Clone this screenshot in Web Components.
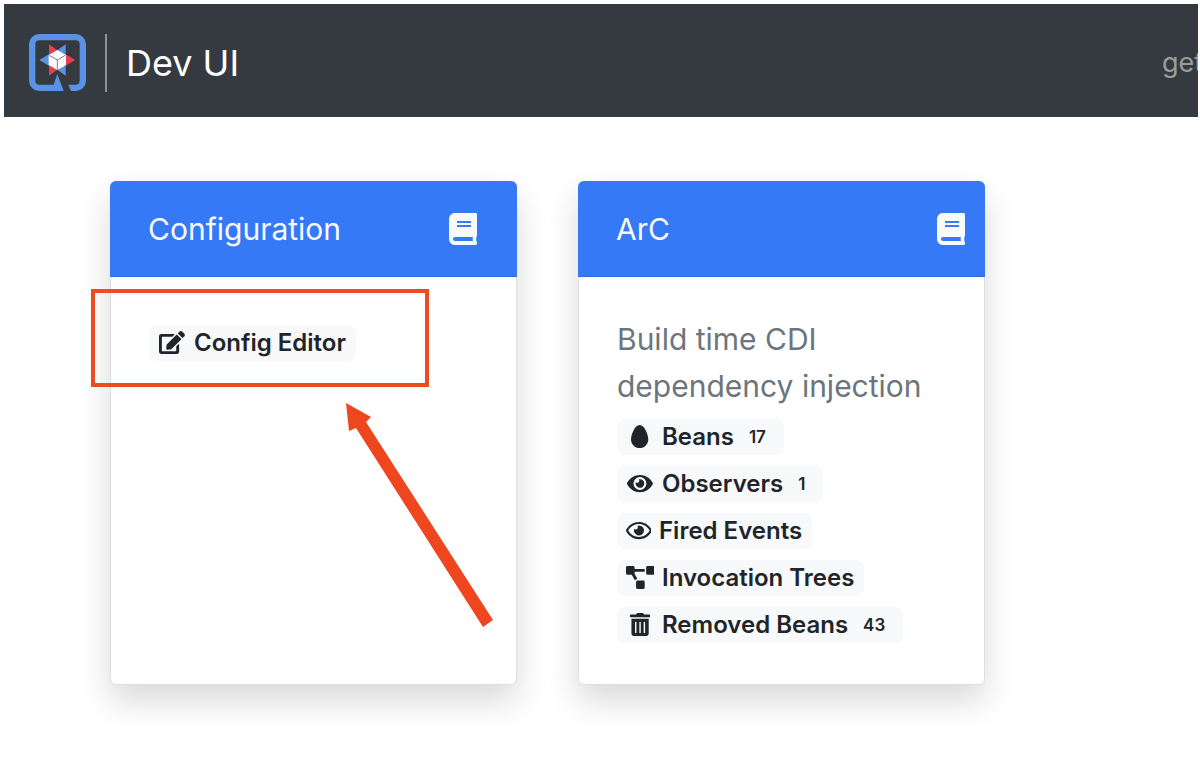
<!DOCTYPE html>
<html lang="en">
<head>
<meta charset="utf-8">
<title>Dev UI</title>
<style>
  html, body { margin: 0; background: #fff; }
  body { font-family: Inter, "Liberation Sans", sans-serif; color: #212529; }
</style>
</head>
<body>
<dev-page>
  <dev-navbar slot="nav" heading="Dev UI">get</dev-navbar>
  <dev-card heading="Configuration">
    <dev-link icon="edit">Config Editor</dev-link>
    <dev-callout slot="overlay"></dev-callout>
  </dev-card>
  <dev-card heading="ArC" style="--book-inset: 20px">
    <span slot="description">Build time CDI dependency injection</span>
    <dev-link icon="egg" count="17">Beans</dev-link>
    <dev-link icon="eye" count="1">Observers</dev-link>
    <dev-link icon="eye-outline">Fired Events</dev-link>
    <dev-link icon="diagram">Invocation Trees</dev-link>
    <dev-link icon="trash" count="43">Removed Beans</dev-link>
  </dev-card>
</dev-page>
<script>
const ICONS = {
  book: [448, "M448 360V24c0-13.3-10.7-24-24-24H96C43 0 0 43 0 96v320c0 53 43 96 96 96h328c13.3 0 24-10.7 24-24v-16c0-7.5-3.5-14.3-8.9-18.7-4.2-15.4-4.2-59.3 0-74.7 5.4-4.3 8.9-11.1 8.9-18.6zM128 134c0-3.3 2.7-6 6-6h212c3.3 0 6 2.7 6 6v20c0 3.3-2.7 6-6 6H134c-3.3 0-6-2.7-6-6v-20zm0 64c0-3.3 2.7-6 6-6h212c3.3 0 6 2.7 6 6v20c0 3.3-2.7 6-6 6H134c-3.3 0-6-2.7-6-6v-20zm253.4 250H96c-17.7 0-32-14.3-32-32 0-17.6 14.4-32 32-32h285.4c-1.9 17.1-1.9 46.9 0 64z"],
  edit: [576, "M402.6 83.2l90.2 90.2c3.8 3.8 3.8 10 0 13.8L274.4 405.6l-92.8 10.3c-12.4 1.4-22.9-9.1-21.5-21.5l10.3-92.8L388.8 83.2c3.8-3.8 10-3.8 13.8 0zm162-22.9l-48.8-48.8c-15.2-15.2-39.9-15.2-55.2 0l-35.4 35.4c-3.8 3.8-3.8 10 0 13.8l90.2 90.2c3.8 3.8 10 3.8 13.8 0l35.4-35.4c15.2-15.3 15.2-40 0-55.2zM384 346.2V448H64V128h229.8c3.2 0 6.2-1.3 8.5-3.5l40-40c7.6-7.6 2.2-20.5-8.5-20.5H48C21.5 64 0 85.5 0 112v352c0 26.5 21.5 48 48 48h352c26.5 0 48-21.5 48-48V306.2c0-10.7-12.9-16-20.5-8.5l-40 40c-2.2 2.3-3.5 5.3-3.5 8.5z"],
  egg: [384, "M192 0C86 0 0 214 0 320s86 192 192 192 192-86 192-192S298 0 192 0z"],
  eye: [576, "M572.52 241.4C518.29 135.59 410.93 64 288 64S57.68 135.64 3.48 241.41a32.35 32.35 0 0 0 0 29.19C57.71 376.41 165.07 448 288 448s230.32-71.64 284.52-177.41a32.35 32.35 0 0 0 0-29.19zM288 400a144 144 0 1 1 144-144 143.93 143.93 0 0 1-144 144zm0-240a95.31 95.31 0 0 0-25.31 3.79 47.85 47.85 0 0 1-66.9 66.9A95.78 95.78 0 1 0 288 160z"],
  "eye-outline": [576, "M288 144a110.94 110.94 0 0 0-31.24 5 55.4 55.4 0 0 1 7.24 27 56 56 0 0 1-56 56 55.4 55.4 0 0 1-27-7.24A111.71 111.71 0 1 0 288 144zm284.52 97.4C518.29 135.59 410.93 64 288 64S57.68 135.64 3.48 241.41a32.35 32.35 0 0 0 0 29.19C57.71 376.41 165.07 448 288 448s230.32-71.64 284.52-177.41a32.35 32.35 0 0 0 0-29.19zM288 400c-98.65 0-189.09-55-237.93-144C98.91 167 189.34 112 288 112s189.09 55 237.93 144C477.1 345 386.66 400 288 400z"],
  diagram: [640, "M384 320H256c-17.67 0-32 14.33-32 32v128c0 17.67 14.33 32 32 32h128c17.67 0 32-14.33 32-32V352c0-17.67-14.33-32-32-32zM192 32c0-17.67-14.33-32-32-32H32C14.33 0 0 14.33 0 32v128c0 17.67 14.33 32 32 32h95.72l73.16 128.04C211.98 300.98 232.4 288 256 288h.28L192 175.51V128h224V64H192V32zM608 0H480c-17.67 0-32 14.33-32 32v128c0 17.67 14.33 32 32 32h128c17.67 0 32-14.33 32-32V32c0-17.67-14.33-32-32-32z"],
  trash: [448, "M32 464a48 48 0 0 0 48 48h288a48 48 0 0 0 48-48V128H32zm272-256a16 16 0 0 1 32 0v224a16 16 0 0 1-32 0zm-96 0a16 16 0 0 1 32 0v224a16 16 0 0 1-32 0zm-96 0a16 16 0 0 1 32 0v224a16 16 0 0 1-32 0zM432 32H312l-9.4-18.7A24 24 0 0 0 281.1 0H166.8a23.72 23.72 0 0 0-21.4 13.3L136 32H16A16 16 0 0 0 0 48v32a16 16 0 0 0 16 16h416a16 16 0 0 0 16-16V48a16 16 0 0 0-16-16z"]
};

const svgIcon = name => {
  const [w, d] = ICONS[name];
  return `<svg viewBox="0 0 ${w} 512" fill="currentColor" aria-hidden="true"><path d="${d}"/></svg>`;
};

class Base extends HTMLElement {
  connectedCallback() {
    if (!this.shadowRoot) this.attachShadow({ mode: "open" }).innerHTML = this.render();
  }
}

customElements.define("dev-page", class extends Base {
  render() {
    return `<style>
      :host { display: block; padding: 4px 2px 40px 4px; overflow: hidden; }
      main { display: grid; grid-template-columns: repeat(auto-fill, minmax(300px, 407px)); gap: 61px; padding: 64px 0 32px 106px; }
    </style>
    <slot name="nav"></slot>
    <main><slot></slot></main>`;
  }
});

customElements.define("dev-navbar", class extends Base {
  render() {
    return `<style>
      :host { display: block; background: #353a40; overflow: hidden; }
      nav { display: flex; align-items: center; box-sizing: border-box; height: 113px; padding: 4px 0 0 25px; }
      .logo { display: block; width: 57px; height: 57px; }
      .brand { display: flex; align-items: center; color: #fff; text-decoration: none; font-size: 36px; line-height: 48px; }
      .rule { width: 2px; height: 58px; margin: 0 19px; background: #909396; }
      .app { width: 36px; margin-left: auto; color: #9a9da0; text-decoration: none; font-size: 27px; line-height: 40px; white-space: nowrap; }
    </style>
    <nav>
      <a class="brand" href="#">
        <svg class="logo" viewBox="27 27 171 171" aria-hidden="true">
          <g fill="#5a93e6">
            <path d="M58 27H167A31 31 0 0 1 198 58V167A31 31 0 0 1 167 198H153L145 179H167A12 12 0 0 0 179 167V58A12 12 0 0 0 167 46H58A12 12 0 0 0 46 58V167A12 12 0 0 0 58 179H101L112 147L131 198H58A31 31 0 0 1 27 167V58A31 31 0 0 1 58 27Z"/>
            <path d="M137 58V91L112 76ZM58 105L87 88V122ZM137 152V119L112 134Z"/>
          </g>
          <path fill="#e83e55" d="M87 58V91L112 76ZM166 105L137 88V122ZM87 152V119L112 134Z"/>
          <path fill="#fff" d="M112 75L138 90V120L112 135L86 120V90Z"/>
          <path fill="none" stroke="#777c81" stroke-width="3" d="M88 91L112 105L136 91M112 105V134"/>
        </svg>
        <span class="rule"></span>
        <span>${this.getAttribute("heading")}</span>
      </a>
      <a class="app" href="#"><slot></slot></a>
    </nav>`;
  }
});

customElements.define("dev-card", class extends Base {
  render() {
    return `<style>
      :host { display: flex; flex-direction: column; position: relative; box-sizing: border-box; min-height: 504px;
        border: 1px solid #dfdfdf; border-radius: 6px; background: #fff; box-shadow: 0 16px 32px rgba(0,0,0,.15); }
      header { display: flex; align-items: center; justify-content: space-between; box-sizing: border-box; height: 96px;
        margin: -1px -1px 0; padding: 0 var(--book-inset, 40px) 0 38px; border-bottom: 1px solid #2f6bdb;
        border-radius: 6px 6px 0 0; background: #3579f6; color: #f8f9fa; }
      h2 { margin: 0; font-size: 30px; font-weight: 400; line-height: 48px; }
      a { display: block; color: inherit; }
      header svg { display: block; width: 28px; height: 32px; }
      .body { padding: 39px 38px 36px; }
      p { margin: 0; color: #6c757d; font-size: 30px; line-height: 47px; }
      .links { display: grid; grid-auto-rows: 47px; align-items: center; justify-items: start; padding-top: 3px; }
    </style>
    <header><h2>${this.getAttribute("heading")}</h2><a href="#" aria-label="Documentation">${svgIcon("book")}</a></header>
    <div class="body">
      <p><slot name="description"></slot></p>
      <div class="links"><slot></slot></div>
    </div>
    <slot name="overlay"></slot>`;
  }
});

customElements.define("dev-link", class extends Base {
  render() {
    const count = this.getAttribute("count");
    return `<style>
      :host { display: block; }
      a { display: flex; align-items: center; gap: 7px; height: 36px; padding: 0 10px 0 8px; border-radius: 8px;
        background: #f8f9fa; color: #212529; text-decoration: none; font-size: 24px; font-weight: 600; line-height: 34px; white-space: nowrap; }
      .icon { display: flex; justify-content: center; width: 30px; }
      :host([icon="eye-outline"]) .icon { width: 27px; }
      svg { display: block; height: 23px; }
      .count { padding: 0 8px; font-size: 17px; }
    </style>
    <a href="#"><span class="icon">${svgIcon(this.getAttribute("icon"))}</span><slot></slot>${count ? `<span class="count">${count}</span>` : ""}</a>`;
  }
});

/* Highlight frame and arrow laid over the first card. */
customElements.define("dev-callout", class extends Base {
  render() {
    return `<style>
      :host { position: absolute; left: -20px; top: 107px; pointer-events: none; }
      .frame { box-sizing: border-box; width: 338px; height: 98px; border: 4px solid #ee4b22; }
      svg { display: block; position: absolute; left: 250px; top: 110px; width: 160px; height: 240px; }
    </style>
    <div class="frame"></div>
    <svg viewBox="0 0 160 240" aria-hidden="true"><path fill="#ee471f" d="M5 4L30 18L25 23L152 221L142 228L15 29L8 32Z"/></svg>`;
  }
});
</script>
</body>
</html>
